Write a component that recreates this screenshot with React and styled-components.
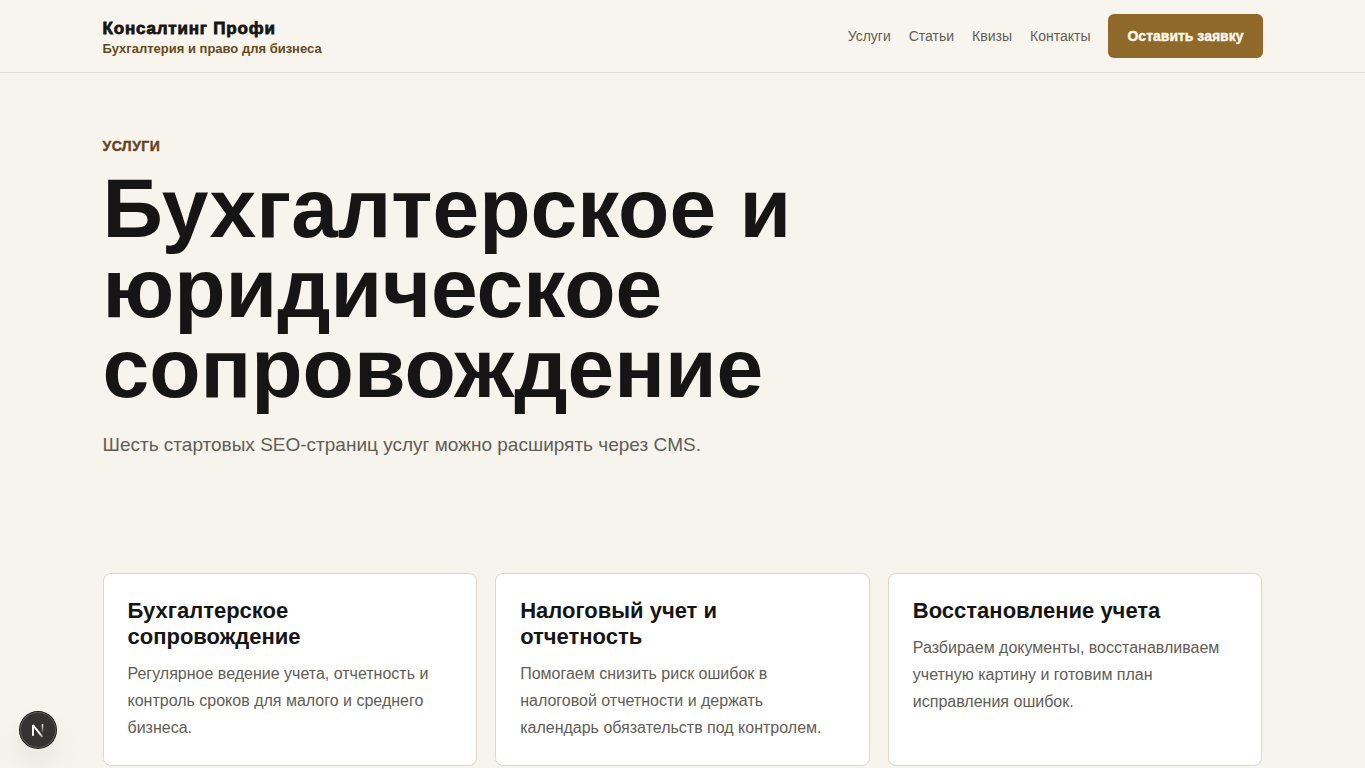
import React from "react";
import styled, { createGlobalStyle } from "styled-components";

const links = ["Услуги", "Статьи", "Квизы", "Контакты"];

const services = [
  {
    title: "Бухгалтерское сопровождение",
    text: "Регулярное ведение учета, отчетность и контроль сроков для малого и среднего бизнеса.",
  },
  {
    title: "Налоговый учет и отчетность",
    text: "Помогаем снизить риск ошибок в налоговой отчетности и держать календарь обязательств под контролем.",
  },
  {
    title: "Восстановление учета",
    text: "Разбираем документы, восстанавливаем учетную картину и готовим план исправления ошибок.",
  },
];

function App() {
  return (
    <>
      <GlobalStyle />
      <Header>
        <HeaderInner>
          <Brand href="#">
            <BrandName>Консалтинг Профи</BrandName>
            <BrandNote>Бухгалтерия и право для бизнеса</BrandNote>
          </Brand>
          <Nav>
            {links.map((link) => (
              <NavLink key={link} href="#">
                {link}
              </NavLink>
            ))}
            <RequestButton href="#">Оставить заявку</RequestButton>
          </Nav>
        </HeaderInner>
      </Header>
      <main>
        <Hero>
          <Eyebrow>Услуги</Eyebrow>
          <Title>Бухгалтерское и юридическое сопровождение</Title>
          <Lead>Шесть стартовых SEO-страниц услуг можно расширять через CMS.</Lead>
        </Hero>
        <Cards>
          {services.map((service) => (
            <Card key={service.title}>
              <CardTitle>{service.title}</CardTitle>
              <CardText>{service.text}</CardText>
            </Card>
          ))}
        </Cards>
      </main>
      <DevBadge aria-label="Next.js">
        <svg width="40" height="40" viewBox="0 0 40 40" fill="none">
          <defs>
            <linearGradient id="diagonal" x1="22" y1="23" x2="26.5" y2="29" gradientUnits="userSpaceOnUse">
              <stop stopColor="#fff" />
              <stop offset="1" stopColor="#fff" stopOpacity="0" />
            </linearGradient>
            <linearGradient id="stem" x1="24" y1="14" x2="24" y2="23.5" gradientUnits="userSpaceOnUse">
              <stop stopColor="#fff" />
              <stop offset="1" stopColor="#fff" stopOpacity="0" />
            </linearGradient>
          </defs>
          <path d="M15 25.8V15l9.5 12.2" stroke="url(#diagonal)" strokeWidth="2" strokeLinejoin="bevel" />
          <path d="M24.5 14.2v9.4" stroke="url(#stem)" strokeWidth="1.6" />
        </svg>
      </DevBadge>
    </>
  );
}

export default App;

const GlobalStyle = createGlobalStyle`
  * {
    box-sizing: border-box;
  }
  body {
    margin: 0;
    height: 100vh;
    overflow: hidden;
    background: #f7f4ed;
    color: #151515;
    font-family: Arial, "Liberation Sans", sans-serif;
    line-height: 1.7;
  }
  a {
    color: inherit;
    text-decoration: none;
  }
  h1, h2, p {
    margin: 0;
  }
`;

const Header = styled.header`
  height: 73px;
  background: #f8f5ee;
  border-bottom: 1px solid #e1ded8;
`;

const HeaderInner = styled.div`
  width: 1160px;
  height: 72px;
  margin: 0 auto;
  display: flex;
  align-items: center;
  justify-content: space-between;
`;

const Brand = styled.a`
  display: grid;
  gap: 1px;
  padding-top: 5px;
`;

const BrandName = styled.span`
  font-size: 17px;
  font-weight: 900;
  line-height: 20px;
  letter-spacing: 0.82px;
  -webkit-text-stroke: 0.8px #151515;
`;

const BrandNote = styled.span`
  color: #66491b;
  font-size: 13px;
  font-weight: 700;
  line-height: 18px;
`;

const Nav = styled.nav`
  display: flex;
  align-items: center;
  gap: 18px;
`;

const NavLink = styled.a`
  padding-top: 2px;
  color: #625d55;
  font-size: 14px;
  &:nth-child(4) {
    margin-right: -1px;
  }
`;

const RequestButton = styled.a`
  display: flex;
  align-items: center;
  justify-content: center;
  width: 155px;
  height: 44px;
  padding: 2px 0 0 1px;
  border-radius: 6px;
  background: #8f692a;
  color: #fff8ea;
  font-size: 14px;
  font-weight: 800;
  -webkit-text-stroke: 0.4px #fff8ea;
`;

const Hero = styled.section`
  width: 1160px;
  margin: 0 auto;
  padding: 63px 0 112px;
`;

const Eyebrow = styled.p`
  color: #66421b;
  font-size: 14px;
  font-weight: 800;
  line-height: 20px;
  letter-spacing: 0.45px;
  text-transform: uppercase;
  -webkit-text-stroke: 0.4px #66421b;
`;

const Title = styled.h1`
  max-width: 760px;
  margin-top: 12px;
  font-size: 84px;
  line-height: 80px;
`;

const Lead = styled.p`
  margin-top: 21px;
  color: #625d55;
  font-size: 19px;
  line-height: 32px;
`;

const Cards = styled.section`
  width: 1160px;
  margin: 0 auto;
  display: grid;
  grid-template-columns: repeat(3, 1fr);
  gap: 18px;
`;

const Card = styled.article`
  padding: 24px;
  border: 1px solid #ded6c9;
  border-radius: 8px;
  background: #fff;
`;

const CardTitle = styled.h2`
  font-size: 22px;
  line-height: 26px;
`;

const CardText = styled.p`
  margin-top: 10px;
  color: #625d55;
  font-size: 16px;
  line-height: 27px;
`;

const DevBadge = styled.div`
  position: fixed;
  left: 20px;
  bottom: 20px;
  width: 36px;
  height: 36px;
  display: flex;
  align-items: center;
  justify-content: center;
  border-radius: 50%;
  background: #343331;
  box-shadow: 0 0 0 1px #171717, inset 0 0 0 1px #5a5958, 0 16px 32px -8px rgba(0, 0, 0, 0.24);
  svg {
    flex: none;
  }
`;
